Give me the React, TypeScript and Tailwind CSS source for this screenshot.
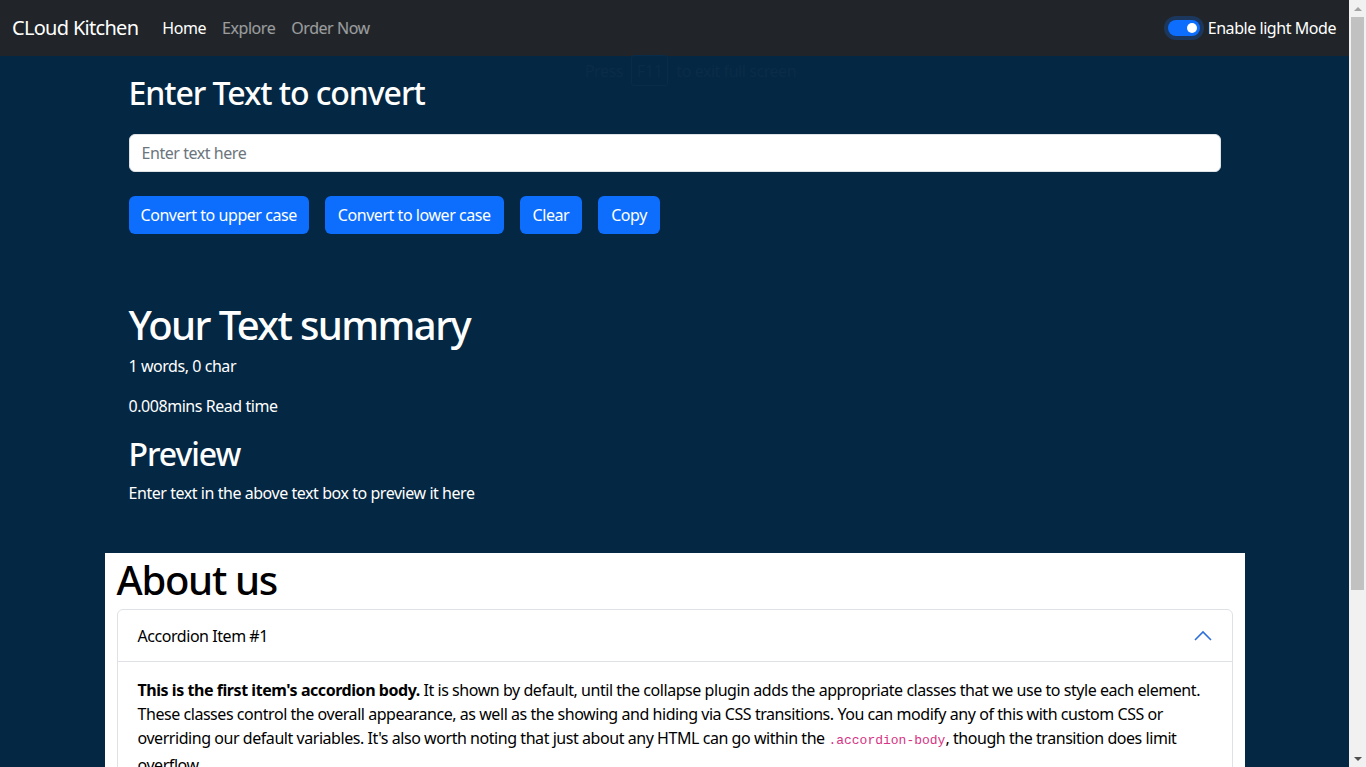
import { useState } from "react"

const font = { fontFamily: '"Noto Sans", "Open Sans", sans-serif' }

function Navbar() {
  return (
    <nav className="h-[56px] bg-[#212529] flex items-center px-3 shrink-0">
      <span className="text-white text-[20px] tracking-[-0.035em] mr-[24px]">CLoud Kitchen</span>
      <div className="flex items-center gap-4 text-[16px]">
        <span className="text-white">Home</span>
        <span className="text-white/55">Explore</span>
        <span className="text-white/55">Order Now</span>
      </div>
      <div className="ml-auto flex items-center gap-2 text-white text-[16px] pr-[1px]">
        <span className="w-[32px] h-[16px] rounded-full bg-[#0d6efd] flex items-center justify-end px-[3px] shadow-[0_0_0_4px_rgba(13,110,253,0.25)]">
          <span className="w-[10px] h-[10px] rounded-full bg-white"></span>
        </span>
        <span>Enable light Mode</span>
      </div>
    </nav>
  )
}

function Scrollbar() {
  return (
    <div className="w-[17px] h-full bg-[#f1f1f1] flex flex-col items-center shrink-0">
      <div className="h-[17px] flex items-center justify-center">
        <div className="w-0 h-0 border-l-[4px] border-r-[4px] border-b-[4px] border-l-transparent border-r-transparent border-b-[#a3a3a3]"></div>
      </div>
      <div className="w-[13px] h-[573px] bg-[#c1c1c1]"></div>
      <div className="flex-1"></div>
      <div className="h-[17px] flex items-center justify-center">
        <div className="w-0 h-0 border-l-[4px] border-r-[4px] border-t-[4px] border-l-transparent border-r-transparent border-t-[#505050]"></div>
      </div>
    </div>
  )
}

export default function App() {
  const [text, setText] = useState("")

  return (
    <div className="flex h-[767px] overflow-hidden tracking-[-0.028em]" style={font}>
      <div className="flex-1 bg-[#042743] flex flex-col relative">
        <Navbar />
        {/* browser fullscreen hint, barely visible */}
        <div className="absolute left-[585px] top-[55px] flex items-center gap-[8px] text-[16px] text-[#0b2c48]">
          <span>Press</span>
          <span className="border border-[#0b2c48] rounded-[3px] h-[31px] px-[5px] flex items-center">F11</span>
          <span>to exit full screen</span>
        </div>

        <div className="w-[1140px] mx-auto px-[24px] text-white">
          <h2 className="text-[32px] font-medium leading-[1.2] tracking-[-0.033em] mt-[18px] mb-[22px]">Enter Text to convert</h2>
          <input
            value={text}
            onChange={(e) => setText(e.target.value)}
            placeholder="Enter text here"
            className="w-full h-[38px] bg-white rounded-[6px] border border-[#dee2e6] px-[12px] text-[16px] text-[#212529] placeholder:text-[#6c757d] outline-none"
          />
          <div className="flex gap-[16px] mt-[24px]">
            <button className="bg-[#0d6efd] text-white text-[16px] h-[38px] px-[12px] rounded-[6px]">Convert to upper case</button>
            <button className="bg-[#0d6efd] text-white text-[16px] h-[38px] px-[13px] rounded-[6px]">Convert to lower case</button>
            <button className="bg-[#0d6efd] text-white text-[16px] h-[38px] px-[13px] rounded-[6px]">Clear</button>
            <button className="bg-[#0d6efd] text-white text-[16px] h-[38px] px-[13px] rounded-[6px]">Copy</button>
          </div>

          <h1 className="text-[40px] font-medium leading-[1.2] tracking-[-0.04em] mt-[67px] mb-[5px]">Your Text summary</h1>
          <p className="text-[16px] leading-[24px] mb-[16px]">1 words, 0 char</p>
          <p className="text-[16px] leading-[24px] mb-[17px]">0.008mins Read time</p>
          <h2 className="text-[32px] font-medium leading-[1.2] tracking-[-0.033em] mb-[7px]">Preview</h2>
          <p className="text-[16px] leading-[24px]">Enter text in the above text box to preview it here</p>
        </div>

        <div className="w-[1140px] mx-auto bg-white px-[12px] mt-[48px] flex-1 text-[#212529]">
          <h1 className="text-[40px] font-medium leading-[48px] tracking-[-0.032em] text-black mt-[3px] mb-[5px]">About us</h1>
          <div className="border border-[#dee2e6] rounded-t-[6px]">
            <div className="h-[52px] flex items-center px-[20px] pt-[1px] border-b border-[#dee2e6]">
              <span className="text-[16px] text-black">Accordion Item #1</span>
              <svg className="ml-auto" width="18" height="12" viewBox="0 0 18 12" fill="none">
                <path d="M1 10 L9 2 L17 10" stroke="#2f6fdb" strokeWidth="1.6" />
              </svg>
            </div>
            <div className="px-[20px] pt-[16px] text-[16px] leading-[24px] text-black">
              <strong className="font-bold">This is the first item's accordion body.</strong> It is shown by default, until the collapse plugin adds the appropriate classes that we use to style each element. These classes control the overall appearance, as well as the showing and hiding via CSS transitions. You can modify any of this with custom CSS or overriding our default variables. It's also worth noting that just about any HTML can go within the{" "}
              <code className="text-[13px] tracking-normal text-[#d63384]" style={{ fontFamily: '"Liberation Mono", monospace' }}>.accordion-body</code>, though the transition does limit overflow.
            </div>
          </div>
        </div>
      </div>
      <Scrollbar />
    </div>
  )
}
